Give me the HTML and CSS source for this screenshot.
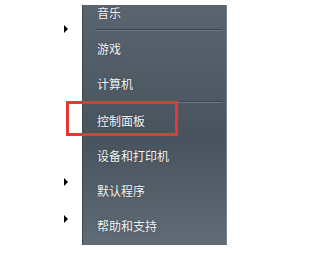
FILE: index.html
```html
<!DOCTYPE html>
<html lang="zh-CN">
<head>
<meta charset="utf-8">
<title>开始菜单</title>
<link rel="stylesheet" href="styles.css">
</head>
<body>
<div class="stage">
  <div class="left">
    <span class="arrow a1"></span>
    <span class="arrow a2"></span>
    <span class="arrow a3"></span>
  </div>
  <div class="panel">
    <div class="item first">音乐</div>
    <div class="sep"></div>
    <div class="item">游戏</div>
    <div class="item">计算机</div>
    <div class="sep"></div>
    <div class="item">控制面板</div>
    <div class="item">设备和打印机</div>
    <div class="item">默认程序</div>
    <div class="item">帮助和支持</div>
  </div>
  <div class="highlight"></div>
</div>
</body>
</html>
```

FILE: styles.css
```css
html, body {
  margin: 0;
  padding: 0;
  background: #ffffff;
}
.stage {
  position: relative;
  width: 236px;
  height: 253px;
  display: flex;
  align-items: flex-start;
}
.left {
  width: 82px;
  display: flex;
  flex-direction: column;
  padding-left: 64px;
  box-sizing: border-box;
}
.arrow {
  display: block;
  width: 0;
  height: 0;
  border-left: 4px solid #000;
  border-top: 4px solid transparent;
  border-bottom: 4px solid transparent;
}
.a1 { margin-top: 25px; }
.a2 { margin-top: 145px; }
.a3 { margin-top: 29px; }
.panel {
  margin-top: 5px;
  width: 145px;
  height: 240px;
  box-sizing: border-box;
  border-left: 1px solid #3d464e;
  border-right: 1px solid #77838d;
  background: linear-gradient(180deg, #59646e 0%, #4f5a64 35%, #49535d 55%, #55606a 80%, #5f6b75 100%);
  display: flex;
  flex-direction: column;
  font-family: "Noto Sans CJK SC", "Noto Sans", sans-serif;
  font-size: 12px;
  color: #f1f4f6;
}
.item {
  height: 35px;
  flex: none;
  display: flex;
  align-items: center;
  padding-left: 14px;
  line-height: 16px;
  text-shadow: 0 0 2px rgba(40, 50, 60, 0.6);
}
.item.first {
  height: 24px;
  align-items: flex-start;
}
.sep {
  flex: none;
  height: 1px;
  margin: 0 4px 0 13px;
  background: #3c454d;
  border-bottom: 1px solid #6c7883;
}
.highlight {
  position: absolute;
  left: 66px;
  top: 101px;
  width: 112px;
  height: 35px;
  box-sizing: border-box;
  border: 3px solid #e53a33;
}
```
